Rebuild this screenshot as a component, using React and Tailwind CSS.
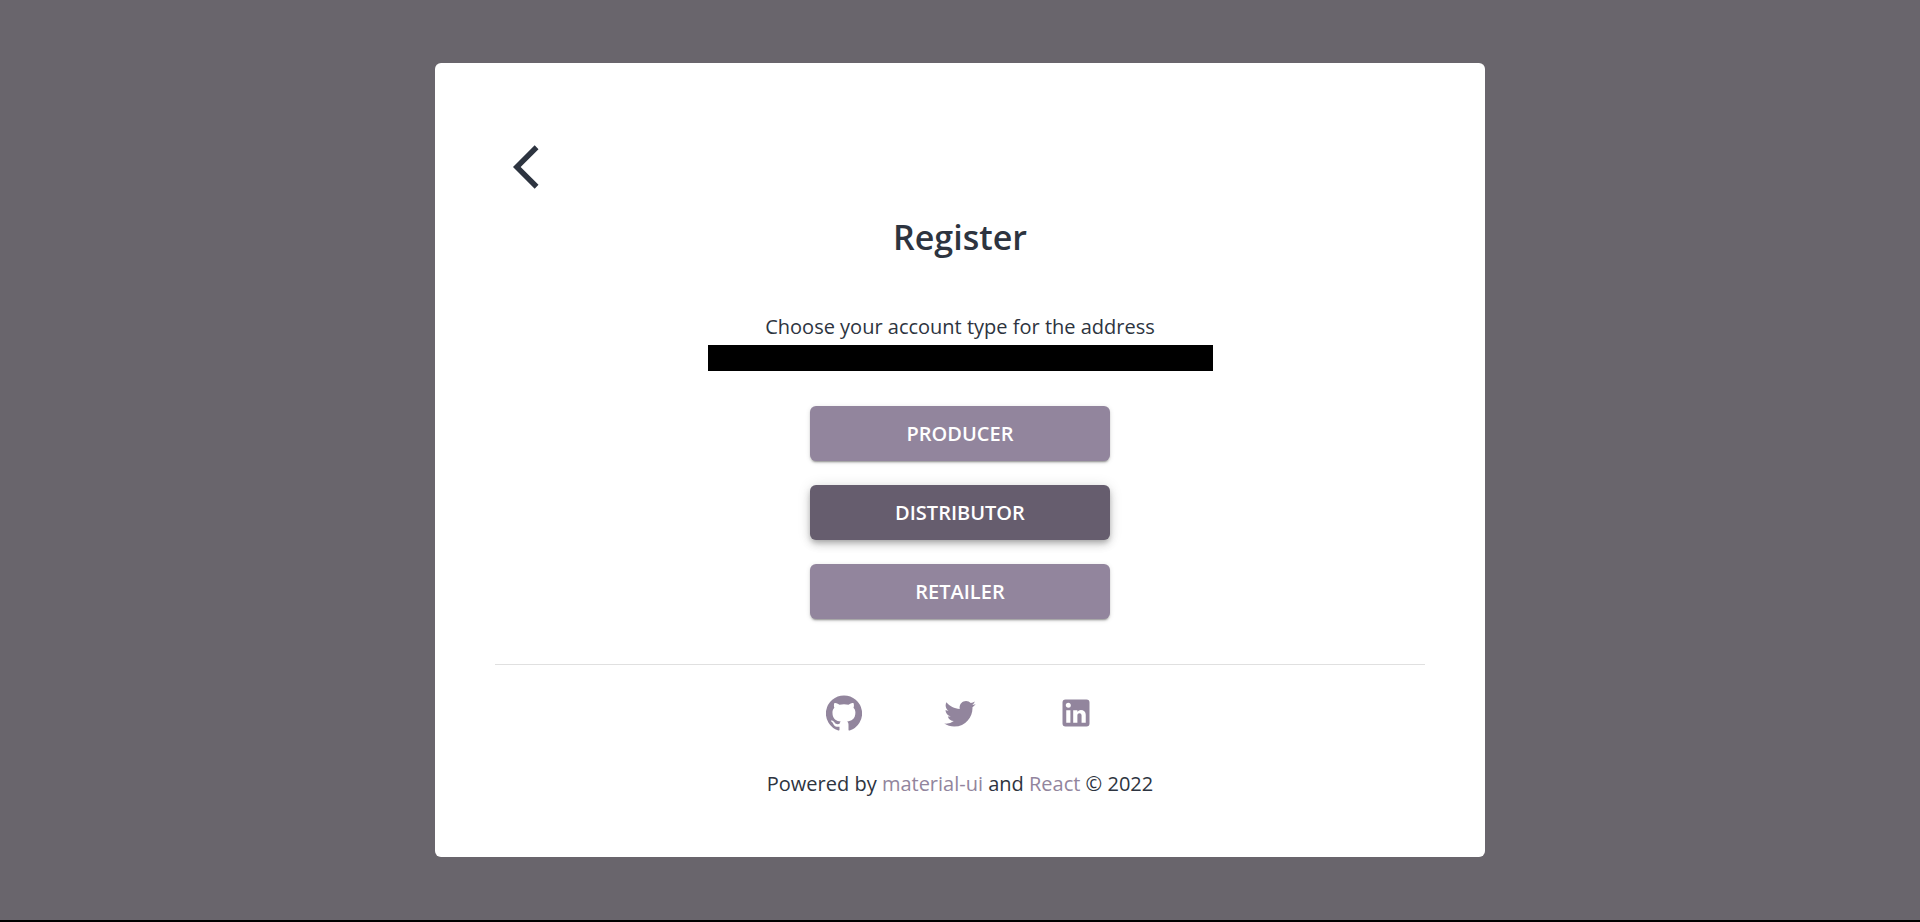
const accounts = [
  { label: "Producer", active: false },
  { label: "Distributor", active: true },
  { label: "Retailer", active: false },
];

const socials = [
  {
    name: "GitHub",
    href: "https://github.com",
    path: "M12 .3a12 12 0 0 0-3.8 23.4c.6.1.8-.3.8-.6v-2c-3.3.7-4-1.6-4-1.6-.6-1.4-1.4-1.8-1.4-1.8-1-.7.1-.7.1-.7 1.2 0 1.9 1.2 1.9 1.2 1 1.8 2.8 1.3 3.5 1 0-.8.4-1.3.7-1.6-2.7-.3-5.5-1.3-5.5-6 0-1.2.5-2.3 1.3-3.1-.2-.4-.6-1.6 0-3.2 0 0 1-.3 3.4 1.2a11.5 11.5 0 0 1 6 0c2.3-1.5 3.3-1.2 3.3-1.2.6 1.6.2 2.8 0 3.2.9.8 1.3 1.9 1.3 3.2 0 4.6-2.8 5.6-5.5 5.9.5.4.9 1 .9 2.2v3.3c0 .3.1.7.8.6A12 12 0 0 0 12 .3",
  },
  {
    name: "Twitter",
    href: "https://twitter.com",
    path: "M22.46 6c-.77.35-1.6.58-2.46.69.88-.53 1.56-1.37 1.88-2.38-.83.5-1.75.85-2.72 1.05C18.37 4.5 17.26 4 16 4c-2.35 0-4.27 1.92-4.27 4.29 0 .34.04.67.11.98C8.28 9.09 5.11 7.38 3 4.79c-.37.63-.58 1.37-.58 2.15 0 1.49.75 2.81 1.91 3.56-.71 0-1.37-.2-1.95-.5v.03c0 2.08 1.48 3.82 3.44 4.21a4.22 4.22 0 0 1-1.93.07 4.28 4.28 0 0 0 4 2.98 8.521 8.521 0 0 1-5.33 1.84c-.34 0-.68-.02-1.02-.06C3.44 20.29 5.7 21 8.12 21 16 21 20.33 14.46 20.33 8.79c0-.19 0-.37-.01-.56.84-.6 1.56-1.36 2.14-2.23z",
  },
  {
    name: "LinkedIn",
    href: "https://www.linkedin.com",
    path: "M19 3a2 2 0 0 1 2 2v14a2 2 0 0 1-2 2H5a2 2 0 0 1-2-2V5a2 2 0 0 1 2-2h14m-.5 15.5v-5.3a3.26 3.26 0 0 0-3.26-3.26c-.85 0-1.84.52-2.32 1.3v-1.11h-2.79v8.37h2.79v-4.93c0-.77.62-1.4 1.39-1.4a1.4 1.4 0 0 1 1.4 1.4v4.93h2.79M6.88 8.56a1.68 1.68 0 0 0 1.68-1.68c0-.93-.75-1.69-1.68-1.69a1.69 1.69 0 0 0-1.69 1.69c0 .93.76 1.68 1.69 1.68m1.39 9.94v-8.37H5.5v8.37h2.77z",
  },
];

const restShadow =
  "bg-[#92859d] shadow-[0_3px_1px_-2px_rgba(0,0,0,0.2),0_2px_2px_0_rgba(0,0,0,0.14),0_1px_5px_0_rgba(0,0,0,0.12)]";
const raisedShadow =
  "bg-[#665d6e] shadow-[0_3px_5px_-1px_rgba(0,0,0,0.2),0_5px_8px_0_rgba(0,0,0,0.14),0_1px_14px_0_rgba(0,0,0,0.12)]";

function AccountButton({ label, active }) {
  return (
    <button
      type="button"
      className={`w-full cursor-pointer rounded-md py-3 text-xl leading-[31px] font-semibold text-white uppercase ${active ? raisedShadow : restShadow}`}
    >
      {label}
    </button>
  );
}

function SocialLink({ name, href, path }) {
  return (
    <a href={href} aria-label={name} className="text-[#92859d]">
      <svg viewBox="0 0 24 24" className="size-9" fill="currentColor" aria-hidden="true">
        <path d={path} />
      </svg>
    </a>
  );
}

export default function App() {
  return (
    <div className="flex min-h-screen flex-col border-b-2 border-black bg-[#69656c] px-4 font-['Open_Sans','Noto_Sans',sans-serif] text-xl text-[#2d3440]">
      <main className="mx-auto mt-[63px] mb-[62px] w-full max-w-[1050px] rounded-md bg-white px-[60px] pt-[78px] pb-[57px]">
        <button type="button" aria-label="Back" className="ml-[5px] block cursor-pointer">
          <svg viewBox="0 0 24 24" className="size-[52px]" fill="currentColor" aria-hidden="true">
            <path d="M17.77 3.77 16 2 6 12l10 10 1.77-1.77L9.54 12z" />
          </svg>
        </button>

        <div className="flex flex-col items-center">
          <h1 className="mt-5 text-[34px] leading-12 font-semibold">Register</h1>
          <p className="mt-[50px] text-center leading-8">Choose your account type for the address</p>
          <div className="mt-0.5 h-[26px] w-full max-w-[505px] bg-black" />
          <div className="mt-[35px] flex w-full max-w-[300px] flex-col gap-6">
            {accounts.map((account) => (
              <AccountButton key={account.label} {...account} />
            ))}
          </div>
        </div>

        <hr className="mt-[45px] border-[#e0e0e0]" />

        <footer className="flex flex-col items-center">
          <div className="mt-[30px] flex gap-20">
            {socials.map((social) => (
              <SocialLink key={social.name} {...social} />
            ))}
          </div>
          <p className="mt-[37px] text-center leading-8">
            Powered by{" "}
            <a href="https://mui.com" className="text-[#92859d]">material-ui</a>
            {" and "}
            <a href="https://react.dev" className="text-[#92859d]">React</a> © 2022
          </p>
        </footer>
      </main>
    </div>
  );
}
